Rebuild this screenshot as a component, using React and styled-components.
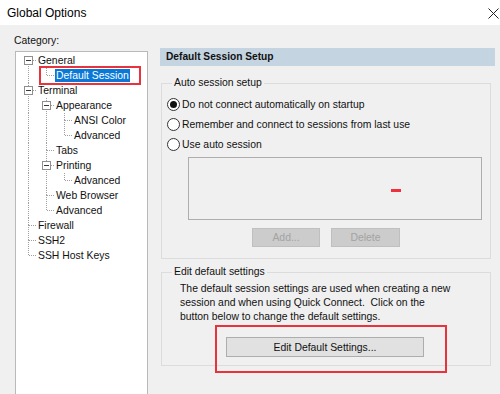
import React from 'react';
import styled, { createGlobalStyle } from 'styled-components';

const Global = createGlobalStyle`
  html, body {
    margin: 0;
    padding: 0;
    width: 500px;
    height: 394px;
    overflow: hidden;
    background: #f0f0f0;
  }
  body {
    font-family: "Liberation Sans", Arial, sans-serif;
    font-size: 10.4px;
    color: #111;
  }
`;

const Window = styled.div`
  width: 500px;
  height: 394px;
  display: flex;
  flex-direction: column;
  overflow: hidden;
`;

const TitleBar = styled.div`
  height: 25px;
  flex: none;
  background: #fff;
  display: flex;
  align-items: center;
  justify-content: space-between;
  padding: 0 1px 0 7px;
  font-size: 12px;
  color: #000;
`;

const CloseBtn = styled.div`
  width: 12px;
  height: 12px;
  display: flex;
  align-items: center;
  justify-content: center;
  margin-top: 1px;
`;

const Body = styled.div`
  flex: 1;
  display: flex;
  gap: 12px;
  padding: 0 5px 0 14px;
`;

const LeftCol = styled.div`
  width: 134px;
  display: flex;
  flex-direction: column;
  padding-top: 8px;
`;

const Label = styled.div`
  height: 15px;
  line-height: 15px;
  margin-bottom: 3px;
`;

const TreeBox = styled.div`
  margin-left: 1px;
  height: 360px;
  background: #fff;
  border: 1px solid #b9b9b9;
  padding: 1px 0 0 3px;
`;

const Row = styled.div`
  display: flex;
  align-items: center;
  height: 15px;
`;

const RowText = styled.span`
  position: relative;
  display: inline-block;
  height: 13px;
  line-height: 13px;
  padding: 0 1px;
  white-space: nowrap;
  background: ${(p) => (p.$selected ? '#0a78d6' : 'transparent')};
  color: ${(p) => (p.$selected ? '#fff' : '#111')};
`;

const Annot = styled.span`
  position: absolute;
  border: 2px solid #e8333d;
  pointer-events: none;
  top: ${(p) => p.$t}px;
  left: ${(p) => p.$l}px;
  right: ${(p) => p.$r}px;
  bottom: ${(p) => p.$b}px;
`;

const RightCol = styled.div`
  flex: 1;
  display: flex;
  flex-direction: column;
  padding-top: 23px;
`;

const Header = styled.div`
  height: 18px;
  line-height: 18px;
  background: #c5d4e1;
  padding-left: 6px;
  font-weight: bold;
  font-size: 10.2px;
`;

const Group = styled.fieldset`
  margin: ${(p) => p.$mt}px 4px 0 1px;
  padding: ${(p) => p.$pt}px 8px ${(p) => p.$pb}px 5px;
  border: 1px solid #dcdcdc;
  border-radius: 0;
  min-width: 0;
`;

const Legend = styled.legend`
  margin-left: 5px;
  padding: 0 2px;
  line-height: 12px;
  height: 12px;
`;

const RadioRow = styled.label`
  display: flex;
  align-items: center;
  gap: 2px;
  height: 20px;
`;

const RadioDot = styled.span`
  width: 13px;
  height: 13px;
  box-sizing: border-box;
  border-radius: 50%;
  border: 1px solid #333;
  background: #fff;
  display: flex;
  align-items: center;
  justify-content: center;

  &::after {
    content: '';
    width: 7px;
    height: 7px;
    border-radius: 50%;
    background: ${(p) => (p.$on ? '#111' : 'transparent')};
  }
`;

const ListBox = styled.div`
  margin: 3px 0 0 21px;
  height: 63px;
  box-sizing: border-box;
  border: 1px solid #adadad;
  background: #f0f0f0;
  display: flex;
  align-items: center;
  justify-content: flex-end;
  padding-right: 80px;
`;

const Mark = styled.span`
  width: 10px;
  height: 3px;
  background: #f0303c;
  margin-top: 3px;
`;

const BtnRow = styled.div`
  display: flex;
  gap: 11px;
  margin: 8px 0 0 85px;
`;

const Button = styled.button`
  font: inherit;
  width: ${(p) => p.$w}px;
  height: ${(p) => p.$h}px;
  padding: 0;
  border: 1px solid ${(p) => (p.disabled ? '#bfbfbf' : '#adadad')};
  background: ${(p) => (p.disabled ? '#cccccc' : '#e1e1e1')};
  color: ${(p) => (p.disabled ? '#a3a3a3' : '#111')};
  border-radius: 0;
`;

const Desc = styled.p`
  margin: 4px 0 0 13px;
  line-height: 14px;
`;

const EditWrap = styled.div`
  position: relative;
  align-self: flex-start;
  margin: 13px 0 0 59px;
`;

const Col = styled.div`
  display: flex;
  flex-direction: column;
`;

const tree = [
  { label: 'General', children: [{ label: 'Default Session', selected: true, annot: true }] },
  {
    label: 'Terminal',
    children: [
      { label: 'Appearance', children: [{ label: 'ANSI Color' }, { label: 'Advanced' }] },
      { label: 'Tabs' },
      { label: 'Printing', children: [{ label: 'Advanced' }] },
      { label: 'Web Browser' },
      { label: 'Advanced' },
    ],
  },
  { label: 'Firewall' },
  { label: 'SSH2' },
  { label: 'SSH Host Keys' },
];

function flatten(nodes, guides = [], out = [], root = true) {
  nodes.forEach((n, i) => {
    const hasNext = i < nodes.length - 1;
    out.push({ ...n, guides, hasNext, first: root && i === 0, hasKids: !!n.children });
    if (n.children) flatten(n.children, [...guides, hasNext], out, false);
  });
  return out;
}

const dash = { stroke: '#a0a0a0', strokeWidth: 1, strokeDasharray: '1 1' };

function Guide({ on }) {
  return (
    <svg width="18" height="15" style={{ flex: 'none' }}>
      {on && <line x1="9.5" y1="0" x2="9.5" y2="15" {...dash} />}
    </svg>
  );
}

function Elbow({ row }) {
  return (
    <svg width="18" height="15" style={{ flex: 'none' }}>
      {!row.first && <line x1="9.5" y1="0" x2="9.5" y2="8" {...dash} />}
      {row.hasNext && <line x1="9.5" y1="7" x2="9.5" y2="15" {...dash} />}
      <line x1="10" y1="7.5" x2="18" y2="7.5" {...dash} />
      {row.hasKids && (
        <g>
          <rect x="5.5" y="3.5" width="8" height="8" fill="#fff" stroke="#8f8f8f" />
          <line x1="7" y1="7.5" x2="12" y2="7.5" stroke="#3a3a3a" />
        </g>
      )}
    </svg>
  );
}

function Tree() {
  const rows = flatten(tree);
  return (
    <TreeBox>
      {rows.map((r, i) => (
        <Row key={i}>
          {r.guides.map((g, j) => (
            <Guide key={j} on={g} />
          ))}
          <Elbow row={r} />
          <RowText $selected={r.selected}>
            {r.label}
            {r.annot && <Annot $t={-3} $l={-16} $r={-11} $b={-3} />}
          </RowText>
        </Row>
      ))}
    </TreeBox>
  );
}

export default function App() {
  return (
    <Window>
      <Global />
      <TitleBar>
        <span>Global Options</span>
        <CloseBtn>
          <svg width="11" height="11" viewBox="0 0 11 11">
            <path d="M0.5 0.5 L10.5 10.5 M10.5 0.5 L0.5 10.5" stroke="#222" strokeWidth="1" />
          </svg>
        </CloseBtn>
      </TitleBar>
      <Body>
        <LeftCol>
          <Label>Category:</Label>
          <Tree />
        </LeftCol>
        <RightCol>
          <Header>Default Session Setup</Header>
          <Group $mt={11} $pt={5} $pb={11}>
            <Legend>Auto session setup</Legend>
            <RadioRow>
              <RadioDot $on />
              Do not connect automatically on startup
            </RadioRow>
            <RadioRow>
              <RadioDot />
              Remember and connect to sessions from last use
            </RadioRow>
            <RadioRow>
              <RadioDot />
              Use auto session
            </RadioRow>
            <ListBox>
              <Mark />
            </ListBox>
            <BtnRow>
              <Button disabled $w={68} $h={19}>Add...</Button>
              <Button disabled $w={69} $h={19}>Delete</Button>
            </BtnRow>
          </Group>
          <Group $mt={7} $pt={0} $pb={8}>
            <Legend>Edit default settings</Legend>
            <Col>
              <Desc>
                The default session settings are used when creating a new
                <br />
                session and when using Quick Connect.&nbsp; Click on the
                <br />
                button below to change the default settings.
              </Desc>
              <EditWrap>
                <Button $w={198} $h={20}>Edit Default Settings...</Button>
                <Annot $t={-12} $l={-11} $r={-23} $b={-16} />
              </EditWrap>
            </Col>
          </Group>
        </RightCol>
      </Body>
    </Window>
  );
}
